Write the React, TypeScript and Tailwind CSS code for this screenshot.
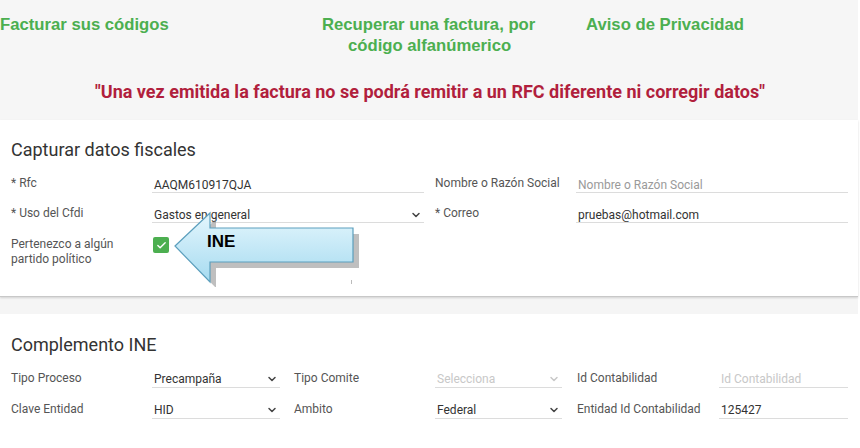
import React from "react";

const Chevron = ({ light }: { light?: boolean }) => (
  <svg width="12" height="12" viewBox="0 0 24 24" fill="none" stroke={light ? "#c8c8c8" : "#444"} strokeWidth="3" strokeLinecap="round" strokeLinejoin="round">
    <path d="M6 9l6 6 6-6" />
  </svg>
);

const Field = ({ value, placeholder, select, light, w }: { value?: string; placeholder?: string; select?: boolean; light?: boolean; w: string }) => (
  <div className={`${w} h-[20px] border-b border-[#dcdcdc] flex items-center justify-between pl-[2px] pr-[2px] pt-[4px]`}>
    {value ? (
      <span className="text-[12px] text-[#333] leading-[16px]">{value}</span>
    ) : (
      <span className={`text-[12px] leading-[16px] ${light ? "text-[#c8c8c8]" : "text-[#9a9a9a]"}`}>{placeholder}</span>
    )}
    {select && <Chevron light={light} />}
  </div>
);

const Label = ({ w, children }: { w: string; children: React.ReactNode }) => (
  <div className={`${w} text-[12px] text-[#555]`}>{children}</div>
);

export default function App() {
  return (
    <div className="w-[860px] h-[448px] overflow-hidden bg-white relative" style={{ fontFamily: "Roboto, 'Liberation Sans', sans-serif" }}>
      {/* header */}
      <div className="h-[120px] bg-[#f6f6f6] w-[858px] pt-[14px]">
        <div className="flex text-[16.7px] font-bold text-[#4caf50] leading-[21px]" style={{ fontFamily: "'Liberation Sans', Arial, sans-serif" }}>
          <div className="w-[322px]">Facturar sus códigos</div>
          <div className="w-[264px]">
            <div>Recuperar una factura, por</div>
            <div className="pl-[26px]">código alfanúmerico</div>
          </div>
          <div>Aviso de Privacidad</div>
        </div>
        <div className="mt-[24px] text-center text-[18px] font-bold text-[#b11f3d] leading-[24px] w-[860px]">
          "Una vez emitida la factura no se podrá remitir a un RFC diferente ni corregir datos"
        </div>
      </div>

      {/* card 1 */}
      <div className="bg-white w-[858px] h-[177px] border-b border-[#c8c8c8] shadow-[0_1px_2px_rgba(0,0,0,0.15)] pl-[11px] pt-[18px] relative">
        <div className="text-[18px] text-[#333] leading-[24px] h-[24px]">Capturar datos fiscales</div>
        <div className="flex h-[30px] items-center mt-[6px]">
          <Label w="w-[141px]">* Rfc</Label>
          <Field w="w-[272px]" value="AAQM610917QJA" />
          <div className="w-[11px]" />
          <Label w="w-[141px]">Nombre o Razón Social</Label>
          <Field w="w-[272px]" placeholder="Nombre o Razón Social" />
        </div>
        <div className="flex h-[30px] items-center">
          <Label w="w-[141px]">* Uso del Cfdi</Label>
          <Field w="w-[272px]" value="Gastos en general" select />
          <div className="w-[11px]" />
          <Label w="w-[141px]">* Correo</Label>
          <Field w="w-[272px]" value="pruebas@hotmail.com" />
        </div>
        <div className="flex mt-[9px]">
          <div className="w-[142px] text-[12px] text-[#555] leading-[15px]">
            Pertenezco a algún
            <br />
            partido político
          </div>
          <div className="w-[16px] h-[16px] bg-[#4caf50] rounded-[2px] flex items-center justify-center">
            <svg width="11" height="11" viewBox="0 0 24 24" fill="none" stroke="white" strokeWidth="3" strokeLinecap="round" strokeLinejoin="round">
              <path d="M4 12l5 5L20 6" />
            </svg>
          </div>
        </div>
        <div className="absolute left-[351px] top-[160px] w-[1px] h-[4px] bg-[#bbb]" />
      </div>

      {/* arrow overlay */}
      <div className="absolute left-[172px] top-[211px] w-[190px] h-[76px]">
        <svg width="190" height="76" viewBox="0 0 190 76">
          <defs>
            <linearGradient id="ag" x1="0" y1="0" x2="0" y2="1">
              <stop offset="0" stopColor="#e4f6fd" />
              <stop offset="1" stopColor="#a6dbf0" />
            </linearGradient>
          </defs>
          <polygon points="6,38 41,5 41,20 184,20 184,54 41,54 41,74" fill="#8a8a8a" opacity="0.55" transform="translate(3,3)" />
          <polygon points="3,35 38,2 38,17 181,17 181,51 38,51 38,71" fill="url(#ag)" stroke="#5c9fbd" strokeWidth="1.2" />
        </svg>
        <div className="absolute left-[35px] top-[21px] text-[17px] font-bold text-black leading-[20px]" style={{ fontFamily: "'Liberation Sans', Arial, sans-serif" }}>INE</div>
      </div>

      {/* gap */}
      <div className="h-[17px] w-[858px] bg-[#f5f5f5]" />

      {/* card 2 */}
      <div className="bg-white w-[858px] h-[134px] pl-[11px] pt-[19px]">
        <div className="text-[18px] text-[#333] leading-[24px] h-[24px]">Complemento INE</div>
        <div className="flex h-[31px] items-center mt-[5px]">
          <Label w="w-[141px]">Tipo Proceso</Label>
          <Field w="w-[128px]" value="Precampaña" select />
          <div className="w-[14px]" />
          <Label w="w-[141px]">Tipo Comite</Label>
          <Field w="w-[127px]" placeholder="Selecciona" select light />
          <div className="w-[15px]" />
          <Label w="w-[142px]">Id Contabilidad</Label>
          <Field w="w-[129px]" placeholder="Id Contabilidad" light />
        </div>
        <div className="flex h-[31px] items-center">
          <Label w="w-[141px]">Clave Entidad</Label>
          <Field w="w-[128px]" value="HID" select />
          <div className="w-[14px]" />
          <Label w="w-[141px]">Ambito</Label>
          <Field w="w-[127px]" value="Federal" select />
          <div className="w-[15px]" />
          <Label w="w-[142px]">Entidad Id Contabilidad</Label>
          <Field w="w-[129px]" value="125427" />
        </div>
      </div>
    </div>
  );
}
